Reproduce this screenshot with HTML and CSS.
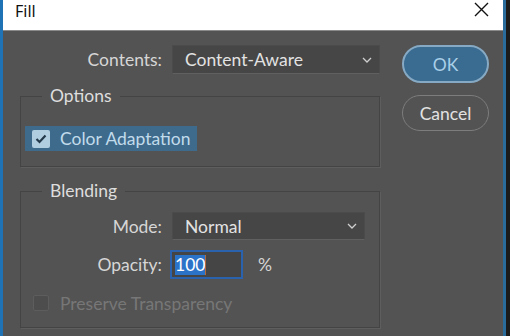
FILE: index.html
```html
<!DOCTYPE html>
<html>
<head>
    <title>Fill</title>
    <link rel="stylesheet" href="styles.css">
</head>
<body>
    <div class="window">
        <div class="titlebar">
            <span class="title">Fill</span>
            <svg class="close" width="15" height="15" viewBox="0 0 15 15">
                <path d="M1 1 L14 14 M14 1 L1 14" stroke="#111" stroke-width="1.4" fill="none"/>
            </svg>
        </div>

        <div class="dialog">
            <div class="main">
                <div class="row contentsRow">
                    <span class="label wideLabel">Contents:</span>
                    <div class="select contentsSelect">
                        <span>Content-Aware</span>
                        <svg width="10" height="6" viewBox="0 0 10 6"><path d="M1 1 L5 5 L9 1" stroke="#cfcfcf" stroke-width="1.3" fill="none"/></svg>
                    </div>
                </div>

                <fieldset class="group options">
                    <legend>Options</legend>
                    <div class="groupBody optionsBody">
                        <div class="checkRow checked">
                            <span class="box">
                                <svg width="12" height="10" viewBox="0 0 12 10"><path d="M1.5 5 L4.5 8 L10.5 1.5" stroke="#24394a" stroke-width="2.2" fill="none"/></svg>
                            </span>
                            <span>Color Adaptation</span>
                        </div>
                    </div>
                </fieldset>

                <fieldset class="group blending">
                    <legend>Blending</legend>
                    <div class="groupBody blendingBody">
                        <div class="row modeRow">
                            <span class="label">Mode:</span>
                            <div class="select modeSelect">
                                <span>Normal</span>
                                <svg width="10" height="6" viewBox="0 0 10 6"><path d="M1 1 L5 5 L9 1" stroke="#cfcfcf" stroke-width="1.3" fill="none"/></svg>
                            </div>
                        </div>
                        <div class="row opacityRow">
                            <span class="label">Opacity:</span>
                            <div class="numInput"><span class="selected">100</span><span class="caret"></span></div>
                            <span class="unit">%</span>
                        </div>
                        <div class="checkRow disabled">
                            <span class="box"></span>
                            <span>Preserve Transparency</span>
                        </div>
                    </div>
                </fieldset>
            </div>

            <div class="buttons">
                <button class="btn ok">OK</button>
                <button class="btn cancel">Cancel</button>
            </div>
        </div>
    </div>
</body>
</html>
```

FILE: styles.css
```css
body {
    margin: 0;
    background-color: #1b1b1b;
    font-family: 'Lato', 'Noto Sans', sans-serif;
    font-size: 17.5px;
    color: #d8d8d8;
}

.window {
    width: 500px;
    height: 336px;
    border-left: 3px solid #1f72b3;
    border-right: 3px solid #2a6c9c;
    background-color: #535353;
}

.titlebar {
    height: 31px;
    background-color: white;
    display: flex;
    justify-content: space-between;
    align-items: flex-start;
    padding: 1px 14px 0 12px;
    box-sizing: border-box;
    border-bottom: 1px solid #8a8a8a;
}

.title {
    font-family: 'Noto Sans', sans-serif;
    font-size: 16px;
    line-height: 20px;
    color: #111;
}

.close {
    margin-top: 1px;
}

.dialog {
    display: flex;
    padding: 14px 0 0 17px;
}

.main {
    width: 360px;
}

.row {
    display: flex;
    align-items: center;
}

.label {
    width: 137px;
    margin-right: 10px;
    text-align: right;
    color: #d6d6d6;
}

.wideLabel {
    width: 142px;
}

.contentsRow {
    height: 29px;
    margin-bottom: 12px;
}

.select {
    height: 100%;
    box-sizing: border-box;
    background-color: #464646;
    border: 1px solid #4b4b4b;
    border-bottom-color: #606060;
    display: flex;
    align-items: center;
    justify-content: space-between;
    padding: 0 7px 0 12px;
    color: #e2e2e2;
}

.contentsSelect {
    width: 208px;
}

.modeSelect {
    width: 193px;
}

/* group boxes */
.group {
    margin: 0 0 14px 0;
    padding: 0;
    border: 1px solid #444;
    box-shadow: 1px 1px 0 #5e5e5e;
}

.group legend {
    margin-left: 21px;
    padding: 0 8px;
    line-height: 20px;
    color: #dedede;
}

.groupBody {
    padding-left: 4px;
}

.optionsBody {
    padding-top: 20px;
    padding-bottom: 15px;
}

.blendingBody {
    padding-top: 11px;
    padding-bottom: 12px;
}

.checkRow {
    display: inline-flex;
    align-items: center;
    height: 25px;
    padding: 0 6px 0 7px;
}

.checkRow .box {
    width: 18px;
    height: 18px;
    border-radius: 2px;
    box-sizing: border-box;
    margin-right: 10px;
    display: flex;
    align-items: center;
    justify-content: center;
}

.checked {
    background-color: #3e6b8b;
    color: #c2dbec;
}

.checked .box {
    background-color: #b1cde0;
}

.modeRow {
    height: 28px;
    margin-bottom: 10px;
}

.opacityRow {
    height: 29px;
}

.numInput {
    width: 69px;
    height: 25px;
    background-color: #454545;
    box-shadow: 0 0 0 2px #2a62ad;
    display: flex;
    align-items: center;
    padding-left: 3px;
    box-sizing: border-box;
}

.selected {
    background-color: #2b72c9;
    color: white;
    line-height: 20px;
}

.caret {
    width: 1px;
    height: 20px;
    background-color: #b36a3c;
}

.unit {
    margin-left: 17px;
    color: #d6d6d6;
}

.disabled {
    height: 22px;
    margin-top: 13px;
    padding-left: 8px;
    color: #777;
}

.disabled .box {
    width: 16px;
    height: 16px;
    border: 1px solid #5d5d5d;
    background-color: #4d4d4d;
    margin-right: 11px;
}

/* buttons */
.buttons {
    margin-left: 22px;
    width: 87px;
    display: flex;
    flex-direction: column;
}

.btn {
    font-family: 'Lato', 'Noto Sans', sans-serif;
    font-size: 17.5px;
    border-radius: 20px;
    cursor: pointer;
}

.ok {
    height: 38px;
    background-color: #3a6b90;
    border: 2px solid #86a9c4;
    color: #a9cfe8;
}

.cancel {
    height: 36px;
    margin-top: 12px;
    background-color: #535353;
    border: 1px solid #7d7d7d;
    color: #e2e2e2;
}
```
